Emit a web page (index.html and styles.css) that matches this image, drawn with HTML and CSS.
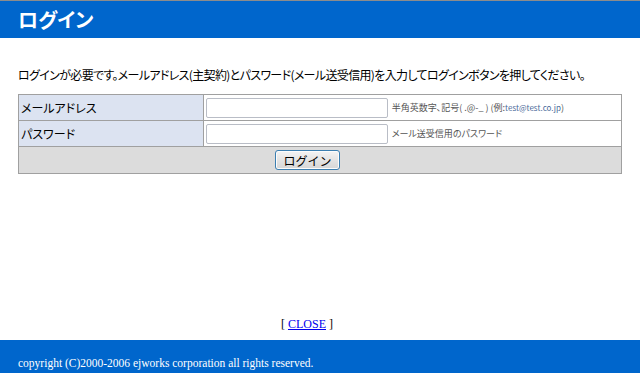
FILE: index.html
```html
<!DOCTYPE html>
<html lang="ja">
<head>
    <meta charset="UTF-8">
    <title>ログイン</title>
    <link rel="stylesheet" href="styles.css">
</head>
<body>

    <header class="page-header">
        <h1>ログイン</h1>
    </header>

    <div class="content">
        <p class="lead">ログインが必要です。メールアドレス(主契約)とパスワード(メール送受信用)を入力してログインボタンを押してください。</p>

        <form class="login-form">
            <table class="login-table">
                <tr>
                    <th>メールアドレス</th>
                    <td>
                        <input type="text" class="field">
                        <span class="hint">半角英数字、記号( .@-_ ) (例:<span class="example">test@test.co.jp</span>)</span>
                    </td>
                </tr>
                <tr>
                    <th>パスワード</th>
                    <td>
                        <input type="password" class="field">
                        <span class="hint">メール送受信用のパスワード</span>
                    </td>
                </tr>
                <tr>
                    <td colspan="2" class="submit-row">
                        <button type="submit" class="login-button">ログイン</button>
                    </td>
                </tr>
            </table>
        </form>
    </div>

    <p class="close">[ <a href="#">CLOSE</a> ]</p>

    <footer class="page-footer">
        copyright (C)2000-2006 ejworks corporation all rights reserved.
    </footer>

</body>
</html>
```

FILE: styles.css
```css
html, body {
    height: 100%;
}
body {
    margin: 0;
    display: flex;
    flex-direction: column;
    font-family: "Noto Sans CJK JP", sans-serif;
    font-feature-settings: "palt";
    color: #000;
    background-color: #fff;
}
.page-header {
    border-top: 1px solid #8c8c8c;
    background-color: #0066cc; /* header blue */
    height: 37px;
    padding: 0 18px;
}
.page-header h1 {
    margin: 0;
    color: #fff;
    font-size: 20px;
    line-height: 37px;
    font-weight: bold;
}
.content {
    flex: 1;
    padding: 0 18px;
}
.lead {
    margin: 28px 0 10px;
    font-size: 12px;
    line-height: 18px;
    letter-spacing: -0.65px;
}
.login-form {
    margin: 0;
}
.login-table {
    width: 604px;
    border-collapse: collapse;
    border: 1px solid #a0a0a0;
    font-size: 12px;
}
.login-table th,
.login-table td {
    border: 1px solid #a0a0a0;
    padding: 0 2px;
    height: 25px;
}
.login-table th {
    width: 180px;
    background-color: #dce3f1; /* pale blue label cells */
    font-weight: normal;
    text-align: left;
}
.field {
    width: 182px;
    height: 20px;
    box-sizing: border-box;
    margin: 0 1px 0 0;
    border: 1px solid #b9bdc6;
    border-radius: 2px;
    vertical-align: middle;
}
.hint {
    font-size: 9px;
    color: #555;
    vertical-align: middle;
}
.example {
    color: #4a6a9a;
    font-size: 8px;
}
.login-table .submit-row {
    height: 26px;
    background-color: #dcdcdc;
    text-align: center;
}
.login-button {
    width: 65px;
    height: 20px;
    margin-right: 25px;
    padding: 0;
    font-family: inherit;
    font-size: 12px;
    color: #000;
    border: 1px solid #3c7fb1;
    border-radius: 3px;
    background: linear-gradient(#f4f4f4, #e4e4e4 50%, #d6d6d6);
    box-shadow: inset 0 0 0 1px #fcfcfc;
    vertical-align: middle;
}
.close {
    margin: 0 0 8px;
    padding-right: 26px;
    text-align: center;
    font-family: "Liberation Serif", serif;
    font-size: 12px;
}
.close a {
    color: #0000ee;
}
.page-footer {
    background-color: #0066cc;
    color: #fff;
    height: 33px;
    box-sizing: border-box;
    padding: 16px 18px 0;
    font-family: "Liberation Serif", serif;
    font-size: 11.5px;
    line-height: 14px;
}
```
